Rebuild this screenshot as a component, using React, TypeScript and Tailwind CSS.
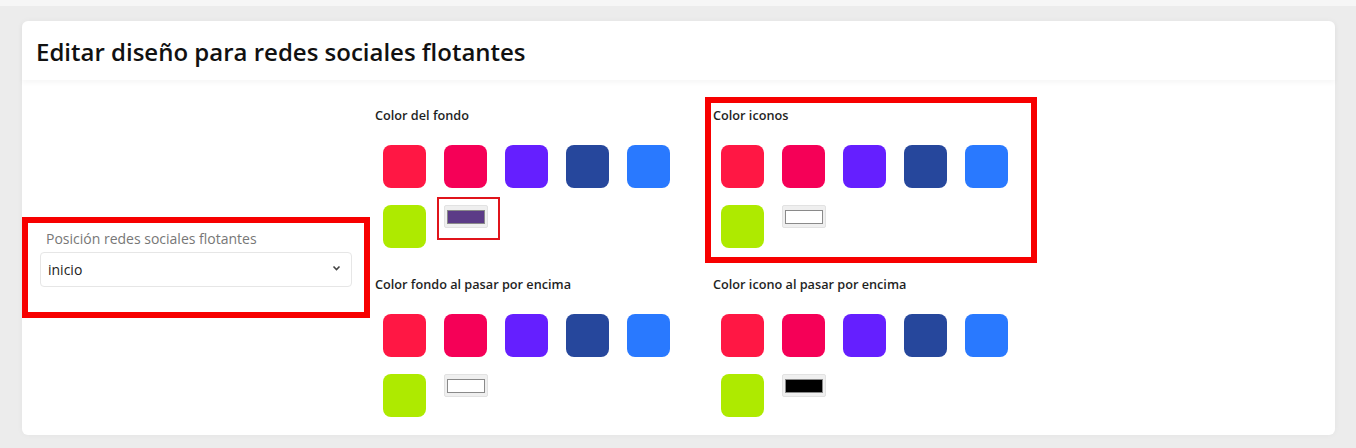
import React from "react";

const COLORS = ["#ff1744", "#f50057", "#651fff", "#26479c", "#2979ff"];

function ColorInput({ color }: { color: string }) {
  return (
    <div className="w-[44px] h-[23px] bg-[#efefef] border border-[#e2e2e2] rounded-[2px] flex items-center justify-center">
      <div className="w-[38px] h-[14px] border border-[#8a8a8a]" style={{ background: color }} />
    </div>
  );
}

function Palette({ label, custom }: { label: string; custom: string }) {
  return (
    <div className="flex flex-col">
      <div className="pl-[5px] h-[24px] flex items-center text-[12.7px] font-semibold text-[#1f1f1f] font-['Open_Sans',sans-serif]">
        {label}
      </div>
      <div className="pl-[13px] pt-[17px] flex flex-col gap-[17px]">
        <div className="flex gap-[18px]">
          {COLORS.map((c) => (
            <div key={c} className="w-[43px] h-[43px] rounded-[8px]" style={{ background: c }} />
          ))}
        </div>
        <div className="flex gap-[18px]">
          <div className="w-[43px] h-[43px] rounded-[8px] bg-[#aeea00]" />
          <ColorInput color={custom} />
        </div>
      </div>
    </div>
  );
}

export default function App() {
  return (
    <div className="w-[1356px] h-[448px] bg-[#ececec] relative overflow-hidden font-['Open_Sans',sans-serif]">
      <div className="h-[6px] bg-[#f6f6f6]" />
      <div className="pl-[22px] pt-[15px]">
        <div className="w-[1313px] h-[414px] bg-white rounded-[6px] shadow-[0_0_6px_rgba(0,0,0,0.04)] flex flex-col">
          <div className="h-[59px] flex items-center pl-[14px] shadow-[0_3px_5px_rgba(0,0,0,0.035)]">
            <h1 className="text-[24px] font-semibold text-[#111] font-['Open_Sans',sans-serif] leading-none pt-[2px]">
              Editar diseño para redes sociales flotantes
            </h1>
          </div>
          <div className="flex flex-1">
            <div className="w-[348px] flex flex-col justify-center pl-[18px] pr-[18px] pt-[2px]">
              <label className="pl-[6px] text-[14px] text-[#777] leading-[18px] mb-[4px]">
                Posición redes sociales flotantes
              </label>
              <div className="h-[35px] border border-[#e6e6e6] rounded-[4px] flex items-center justify-between pl-[7px] pr-[10px] text-[14px] text-[#222]">
                <span>inicio</span>
                <svg width="9" height="6" viewBox="0 0 9 6" className="mb-[4px]">
                  <path d="M1.5 1.5 L4.5 4.5 L7.5 1.5" stroke="#444" strokeWidth="1.6" fill="none" />
                </svg>
              </div>
            </div>
            <div className="w-[338px] flex flex-col gap-[25px] pt-[24px]">
              <Palette label="Color del fondo" custom="#5c3b87" />
              <Palette label="Color fondo al pasar por encima" custom="#ffffff" />
            </div>
            <div className="w-[338px] flex flex-col gap-[25px] pt-[24px]">
              <Palette label="Color iconos" custom="#ffffff" />
              <Palette label="Color icono al pasar por encima" custom="#000000" />
            </div>
          </div>
        </div>
      </div>
      {/* annotation boxes */}
      <div className="absolute left-[22px] top-[217px] w-[348px] h-[101px] border-[6px] border-[#f70000] pointer-events-none" />
      <div className="absolute left-[705px] top-[97px] w-[332px] h-[166px] border-[6px] border-[#f70000] pointer-events-none" />
      <div className="absolute left-[437px] top-[197px] w-[63px] h-[43px] border-2 border-[#e0141b] pointer-events-none" />
    </div>
  );
}
